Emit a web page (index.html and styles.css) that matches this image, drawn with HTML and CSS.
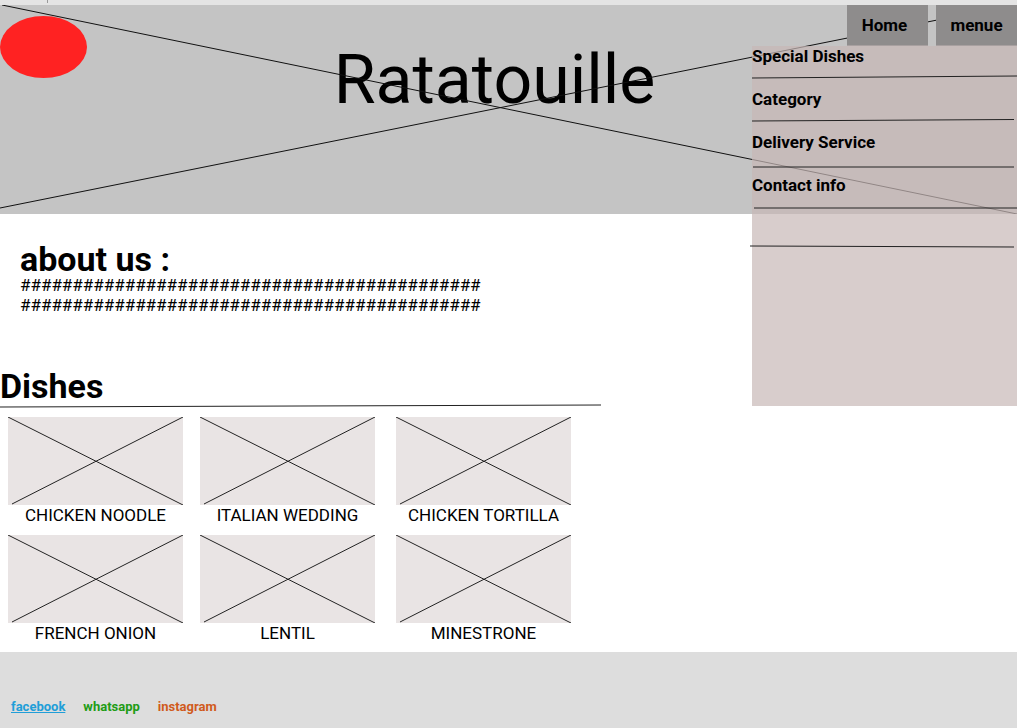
FILE: index.html
```html
<!DOCTYPE html>
<html lang="en">
<head>
<meta charset="utf-8">
<title>Ratatouille</title>
<link rel="stylesheet" href="styles.css">
</head>
<body>
<svg class="symbols" aria-hidden="true">
  <symbol id="cross" viewBox="0 0 175 88">
    <path d="M0 0 175 88M4 87 175 0"/>
  </symbol>
</svg>
<div class="strip"><svg class="tick" viewBox="0 0 2 3" aria-hidden="true"><path d="M0 0h1v3H0z"/></svg></div>
<header class="hero">
  <svg class="hero-lines" viewBox="0 0 1017 209" preserveAspectRatio="none" aria-hidden="true">
    <path d="M2 0 1017 209M0 203 1017 -1"/>
  </svg>
  <div class="logo"></div>
  <h1 class="title">Ratatouille</h1>
  <nav class="nav">
    <div class="nav-buttons">
      <button class="nav-button" type="button">Home</button>
      <button class="nav-button" type="button">menue</button>
    </div>
    <ul class="menu">
      <li class="menu-item"><a href="#special">Special Dishes</a><svg class="rule" viewBox="0 0 265 23" preserveAspectRatio="none" aria-hidden="true"><path d="M0 12 265 10"/></svg></li>
      <li class="menu-item"><a href="#category">Category</a><svg class="rule" viewBox="0 0 265 23" preserveAspectRatio="none" aria-hidden="true"><path d="M0 12 262 10.5"/></svg></li>
      <li class="menu-item"><a href="#delivery">Delivery Service</a><svg class="rule" viewBox="0 0 265 23" preserveAspectRatio="none" aria-hidden="true"><path d="M1 15H262"/></svg></li>
      <li class="menu-item"><a href="#contact">Contact info</a><svg class="rule" viewBox="0 0 265 23" preserveAspectRatio="none" aria-hidden="true"><path d="M2 13H265"/></svg></li>
      <li class="menu-end"><svg class="rule" viewBox="0 0 265 23" preserveAspectRatio="none" aria-hidden="true"><path d="M-2 8 262 9"/></svg></li>
    </ul>
  </nav>
</header>
<main class="content">
  <section class="about">
    <h2 class="heading">about us :</h2>
    <p>############################################<br>############################################</p>
  </section>
  <section class="dishes">
    <h2 class="heading">Dishes</h2>
    <svg class="dishes-rule" viewBox="0 0 601 4" preserveAspectRatio="none" aria-hidden="true"><path d="M0 3 601 1"/></svg>
    <div class="grid">
      <figure class="dish"><svg class="photo" aria-hidden="true"><use href="#cross"/></svg><figcaption>CHICKEN NOODLE</figcaption></figure>
      <figure class="dish"><svg class="photo" aria-hidden="true"><use href="#cross"/></svg><figcaption>ITALIAN WEDDING</figcaption></figure>
      <figure class="dish"><svg class="photo" aria-hidden="true"><use href="#cross"/></svg><figcaption>CHICKEN TORTILLA</figcaption></figure>
      <figure class="dish"><svg class="photo" aria-hidden="true"><use href="#cross"/></svg><figcaption>FRENCH ONION</figcaption></figure>
      <figure class="dish"><svg class="photo" aria-hidden="true"><use href="#cross"/></svg><figcaption>LENTIL</figcaption></figure>
      <figure class="dish"><svg class="photo" aria-hidden="true"><use href="#cross"/></svg><figcaption>MINESTRONE</figcaption></figure>
    </div>
  </section>
</main>
<footer class="footer">
  <a class="facebook" href="#facebook">facebook</a>
  <a class="whatsapp" href="#whatsapp">whatsapp</a>
  <a class="instagram" href="#instagram">instagram</a>
</footer>
</body>
</html>
```

FILE: styles.css
```css
* { box-sizing: border-box; }
body {
  margin: 0;
  min-height: 100vh;
  display: flex;
  flex-direction: column;
  background: #fff;
  color: #000;
  font: 17px/20px Roboto, sans-serif;
}
h1, h2, p, ul, figure { margin: 0; padding: 0; }
ul { list-style: none; }
svg { display: block; fill: none; stroke: #222; stroke-width: 1px; }
svg path { vector-effect: non-scaling-stroke; }
.symbols { position: absolute; width: 0; height: 0; }
.strip { height: 5px; padding-left: 47px; background: #e4e4e4; }
.tick { width: 2px; height: 3px; fill: #999; stroke: none; }

.hero { position: relative; padding: 11px 0 64px; background: #c4c4c4; }
.hero-lines { position: absolute; inset: 0; width: 100%; height: 100%; stroke: #111; }
.logo {
  position: absolute;
  top: 11px;
  left: 0;
  width: 87px;
  height: 62px;
  border-radius: 50%;
  background: #f22;
}
.title {
  padding: 24px 28px 30px 0;
  font-size: 68px;
  line-height: 80px;
  font-weight: 400;
  text-align: center;
}
.nav { position: absolute; top: 0; right: 0; width: 265px; }
.nav-buttons { display: flex; justify-content: flex-end; gap: 8px; }
.nav-button {
  width: 81px;
  height: 41px;
  padding: 0 6px 0 0;
  border: 0;
  border-bottom: 1px solid #a8a0a0;
  background: #8e8c8c;
  color: #000;
  font: 700 17px/20px Roboto, sans-serif;
}
.nav-button + .nav-button { padding: 0; }
.menu { min-height: 360px; background: rgba(199, 184, 183, .7); }
.menu-item a { display: block; color: #000; font-weight: 700; text-decoration: none; }
.menu-end { padding-top: 20px; }
.rule { width: 100%; height: 23px; overflow: visible; }

.about { padding: 29px 20px 0; }
.heading { font-size: 34px; line-height: 32px; font-weight: 700; }
.dishes { padding-top: 55px; }
.dishes-rule { width: 601px; height: 4px; margin-top: 2px; }
.grid {
  display: grid;
  grid-template-columns: 192px 196px 175px;
  row-gap: 10px;
  padding: 9px 8px;
}
.dish { width: 175px; text-align: center; }
.photo { width: 100%; height: 88px; background: #e9e4e4; }

.footer {
  flex: 1;
  display: flex;
  align-items: flex-start;
  gap: 18px;
  padding: 45px 11px 10px;
  background: #ddd;
  font-size: 13px;
  font-weight: 700;
}
.footer a { text-decoration: none; }
.footer .facebook { color: #209ed8; text-decoration: underline; }
.whatsapp { color: #219c15; }
.instagram { color: #d05a1c; }
```
